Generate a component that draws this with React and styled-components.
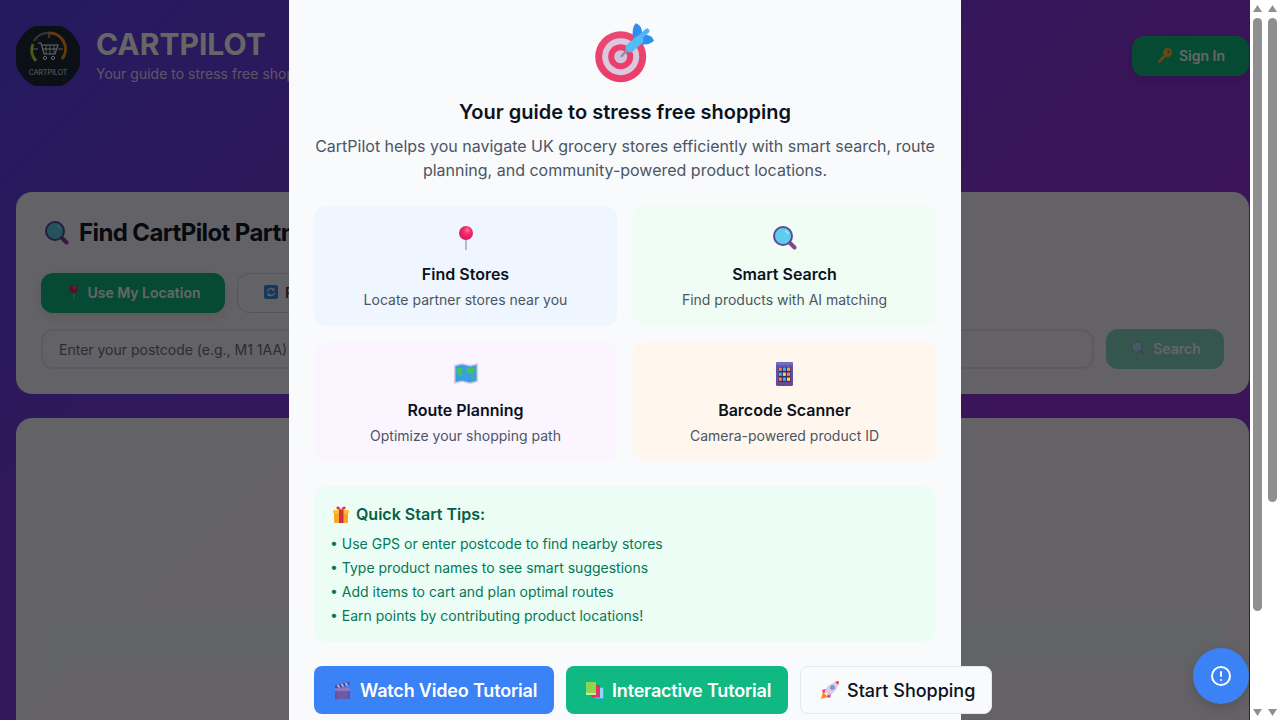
import React from 'react';
import styled, { createGlobalStyle } from 'styled-components';

const Global = createGlobalStyle`
  html, body { margin: 0; padding: 0; height: 100%; overflow: hidden; }
  body { font-family: Inter, "Noto Sans", sans-serif; }
  * { box-sizing: border-box; }
`;

const Shell = styled.div`
  display: flex;
  width: 1280px;
  height: 720px;
  overflow: hidden;
  background: #fff;
`;

const Page = styled.div`
  position: relative;
  width: 1250px;
  height: 720px;
  overflow: hidden;
  padding: 26px 1px 0 16px;
  background: linear-gradient(135deg, #5b42ec 0%, #7b3ce6 30%, #9134de 63%, #9a32e0 100%);
`;

const Header = styled.header`
  display: flex;
  align-items: flex-start;
  height: 166px;
`;

const Logo = styled.svg`
  width: 64px;
  height: 60px;
  flex: none;
`;

const Brand = styled.div`
  margin-left: 16px;
  flex: 1;
`;

const BrandName = styled.h1`
  margin: 0;
  font-size: 30px;
  line-height: 36px;
  font-weight: 700;
  color: #fff;
`;

const BrandSub = styled.p`
  margin: 2px 0 0;
  font-size: 14px;
  line-height: 20px;
  color: rgba(255, 255, 255, 0.8);
`;

const Slot = styled.span`
  display: inline-flex;
  flex: none;
  align-items: center;
  justify-content: center;
  width: ${(p) => p.$w}px;
  padding-right: ${(p) => p.$gap}px;
`;

const pillBase = `
  display: flex;
  align-items: center;
  justify-content: center;
  border: 0;
  color: #fff;
  padding: 0 0 2px;
  font: 600 14px Inter, sans-serif;
`;

const SignIn = styled.button`
  ${pillBase}
  width: 117px;
  height: 40px;
  margin-top: 10px;
  border-radius: 12px;
  background: #10b981;
  box-shadow: 0 4px 12px rgba(0, 0, 0, 0.15);
`;

const Card = styled.section`
  background: rgba(255, 255, 255, 0.95);
  border-radius: 16px;
`;

const SearchCard = styled(Card)`
  height: 202px;
  padding: 25px 25px 0;
`;

const SearchTitle = styled.h2`
  display: flex;
  align-items: center;
  margin: 0 0 24px;
  font-size: 24px;
  line-height: 32px;
  font-weight: 700;
  letter-spacing: -0.6px;
  color: #111827;
  white-space: nowrap;
`;

const ActionRow = styled.div`
  display: flex;
  gap: 12px;
  height: 40px;
`;

const GreenAction = styled.button`
  ${pillBase}
  width: 184px;
  border-radius: 12px;
  background: #10b981;
  box-shadow: 0 4px 12px rgba(0, 0, 0, 0.1);
`;

const GhostAction = styled.button`
  display: flex;
  align-items: center;
  width: 150px;
  border: 1px solid #d1d5db;
  border-radius: 12px;
  background: transparent;
  color: #374151;
  font: 600 14px Inter, sans-serif;
  padding: 0 0 2px 26px;
`;

const SearchRow = styled.div`
  display: flex;
  gap: 12px;
  margin-top: 16px;
  height: 40px;
`;

const PostcodeInput = styled.div`
  flex: 1;
  border: 2px solid #e5e7eb;
  border-radius: 12px;
  padding: 0 16px;
  font-size: 14px;
  line-height: 37px;
  color: #6b7280;
`;

const SearchButton = styled.button`
  ${pillBase}
  width: 118px;
  border-radius: 12px;
  background: #10b981;
  opacity: 0.5;
`;

const ResultsCard = styled(Card)`
  height: 400px;
  margin-top: 24px;
  padding: 200px 25px 0;
`;

const ResultsStrip = styled.div`
  height: 52px;
  border-radius: 8px;
  background: #f3f7f9;
`;

const Overlay = styled.div`
  position: absolute;
  inset: 0;
  display: flex;
  justify-content: center;
  background: rgba(0, 0, 0, 0.6);
`;

const Modal = styled.div`
  width: 672px;
  height: 720px;
  padding: 23px 25px 0;
  background: #f9fafc;
  text-align: center;
`;

const Target = styled.div`
  display: flex;
  justify-content: center;
  height: 60px;
`;

const ModalTitle = styled.h2`
  margin: 15px 0 0;
  font-size: 20px;
  line-height: 28px;
  font-weight: 600;
  color: #0b1220;
`;

const ModalLead = styled.p`
  margin: 8px 0 0;
  font-size: 16px;
  line-height: 24px;
  color: #4b5563;
`;

const Features = styled.div`
  display: grid;
  grid-template-columns: 1fr 1fr;
  gap: 16px;
  margin-top: 24px;
`;

const Feature = styled.div`
  height: 120px;
  border-radius: 12px;
  padding-top: 16px;
  background: ${(p) => p.$bg};
`;

const FeatureIcon = styled.div`
  display: flex;
  align-items: center;
  justify-content: center;
  height: 31px;
`;

const FeatureTitle = styled.h3`
  margin: 9px 0 0;
  font-size: 16px;
  line-height: 24px;
  font-weight: 600;
  color: #0b1220;
`;

const FeatureText = styled.p`
  margin: 4px 0 0;
  font-size: 14px;
  line-height: 20px;
  color: #4b5563;
`;

const Tips = styled.div`
  height: 156px;
  margin-top: 24px;
  padding: 16px;
  border-radius: 12px;
  background: #ecfdf5;
  text-align: left;
`;

const TipsTitle = styled.h4`
  display: flex;
  align-items: center;
  margin: 0 0 6px;
  font-size: 16px;
  line-height: 24px;
  font-weight: 600;
  color: #065f46;
`;

const TipItem = styled.div`
  font-size: 14px;
  line-height: 24px;
  color: #047857;
`;

const Buttons = styled.div`
  display: flex;
  gap: 12px;
  margin-top: 24px;
`;

const ModalButton = styled.button`
  display: flex;
  align-items: center;
  flex: none;
  width: ${(p) => p.$w}px;
  height: 48px;
  padding: 0 16px;
  border-radius: 8px;
  border: ${(p) => (p.$outline ? '1px solid #e2e8f0' : '0')};
  background: ${(p) => p.$bg};
  color: ${(p) => p.$fg};
  font: ${(p) => (p.$outline ? 500 : 600)} 18px Inter, sans-serif;
  letter-spacing: ${(p) => (p.$outline ? '0' : '-0.18px')};
  white-space: nowrap;
`;

const Fab = styled.button`
  position: absolute;
  right: 1px;
  top: 648px;
  width: 56px;
  height: 56px;
  border: 0;
  padding: 0;
  border-radius: 50%;
  background: #3b82f6;
  color: #fff;
  display: flex;
  align-items: center;
  justify-content: center;
  box-shadow: 0 4px 12px rgba(0, 0, 0, 0.15);
`;

const Scrollbar = styled.div`
  position: relative;
  width: 15px;
  height: 720px;
  background: #fff;
`;

const Thumb = styled.div`
  position: absolute;
  left: 3px;
  top: 18px;
  width: 9px;
  height: ${(p) => p.$h}px;
  border-radius: 5px;
  background: #8f8f8f;
`;

const Arrow = styled.svg`
  position: absolute;
  left: 3px;
  width: 9px;
  height: 7px;
  ${(p) => (p.$down ? 'bottom: 4px; transform: rotate(180deg);' : 'top: 5px;')}
`;

const TargetIcon = () => (
  <svg width="60" height="60" viewBox="0 0 60 60">
    <defs>
      <linearGradient id="tg" x1="0" y1="0" x2="0" y2="1">
        <stop offset="0" stopColor="#e84a72" />
        <stop offset="1" stopColor="#ee3a6a" />
      </linearGradient>
    </defs>
    <circle cx="25.7" cy="33.7" r="25.5" fill="url(#tg)" />
    <circle cx="25.7" cy="33.7" r="18.5" fill="#d9c8de" />
    <circle cx="25.7" cy="33.7" r="12.5" fill="#ec3d6d" />
    <circle cx="25.7" cy="33.7" r="6.5" fill="#d3c3da" />
    <path d="M26.7 33 34 25" stroke="#8f8f9e" strokeWidth="2.5" strokeLinecap="round" />
    <path d="M38 14C37 8 38 3 41 .3 45 2 47 5 47 10L44 18Z" fill="#2f8fee" />
    <path d="M44 20C50 23 55 21 59 17.7 57 13 53 11 49 12Z" fill="#2f8fee" />
    <path d="M42 17 52 8" stroke="#55b3f5" strokeWidth="5" strokeLinecap="round" />
    <path d="M35 25 44 17" stroke="#4fbdf6" strokeWidth="9" strokeLinecap="round" />
  </svg>
);

const Pin = ({ h = 24 }) => (
  <svg width={(h * 16) / 24} height={h} viewBox="0 0 16 24">
    <defs>
      <radialGradient id="pn" cx="0.6" cy="0.3" r="0.7">
        <stop offset="0" stopColor="#ff7aa0" />
        <stop offset="0.35" stopColor="#f52d6b" />
        <stop offset="1" stopColor="#d6195a" />
      </radialGradient>
    </defs>
    <rect x="7" y="12" width="2" height="12" fill="#bdb4c8" />
    <circle cx="8" cy="7" r="7" fill="url(#pn)" />
  </svg>
);

const Magnifier = ({ s = 24 }) => (
  <svg width={s} height={s} viewBox="0 0 24 24">
    <path d="M17 17 21.5 21.5" stroke="#86438f" strokeWidth="4" strokeLinecap="round" />
    <circle cx="10" cy="10" r="9" fill="#5ecdec" stroke="#5a4a9c" strokeWidth="2" />
    <path d="M13 5a6 6 0 0 1 2 2.5" stroke="#b6ecf8" strokeWidth="1.4" fill="none" strokeLinecap="round" />
  </svg>
);

const MapIcon = () => (
  <svg width="24" height="21" viewBox="0 0 24 21">
    <path d="M0 2 8 0 16 2 24 0V19L16 21 8 19 0 21Z" fill="#d6c9e2" />
    <path d="M1.5 3.2 8 1.6 16 3.6 22.5 2V17.8L16 19.4 8 17.4 1.5 19Z" fill="#3a9fe2" />
    <path d="M3 5h5l1 3-2 1 1 4-2 1-2-4-2-1zM12 6l5-2 4 1-1 4-2 3-2-2-3 0zM17 14l2-1 1 2-2 1z" fill="#46c067" />
  </svg>
);

const Abacus = () => {
  const colors = ['#ff7a45', '#2fb3f3', '#ff9a3c', '#2fb3f3', '#ffcf40', '#ff7a45', '#ff7a45', '#2fb3f3', '#ffcf40'];
  return (
    <svg width="17" height="24" viewBox="0 0 17 24">
      <defs>
        <linearGradient id="ab" x1="0" y1="0" x2="0" y2="1">
          <stop offset="0" stopColor="#5d5ab4" />
          <stop offset="1" stopColor="#6f4592" />
        </linearGradient>
      </defs>
      <rect width="17" height="24" rx="1.5" fill="url(#ab)" />
      <rect width="17" height="3" rx="1.5" fill="#6f6cc6" />
      <rect x="2.5" y="5" width="12" height="15" fill="#3a2a63" />
      {colors.map((c, i) => (
        <rect key={i} x={2.8 + (i % 3) * 4.1} y={5.5 + Math.floor(i / 3) * 5} width="3" height="3.4" fill={c} />
      ))}
    </svg>
  );
};

const Gift = () => (
  <svg width="16" height="17" viewBox="0 0 16 17">
    <rect x="1" y="6" width="14" height="11" rx="1" fill="#f9a825" />
    <rect y="4" width="16" height="3.5" rx="1" fill="#ffc233" />
    <rect x="6" y="4" width="4.5" height="13" fill="#cf2e4a" />
    <path d="M8 4C5 4 3 3 3.500 1.200 4.500-.2 7 1 8 4 9 1 11.500-.2 12.500 1.200 13 3 11 4 8 4Z" fill="#d8324c" />
  </svg>
);

const Clapper = () => (
  <svg width="17" height="17" viewBox="0 0 17 17">
    <rect x="1" y="6" width="15" height="11" rx="1" fill="#6c5aa8" />
    <path d="M1 6h15v3H1z" fill="#8b78c4" />
    <path d="M2 9v8M15 9v8" stroke="#5a4890" />
    <path d="M.5 3.500 15 0l1 3L1.500 6.500Z" fill="#5b4a8f" />
    <path d="M3.500 3 5.500 5.500M7.500 2 9.500 4.600M11.500 1 13.500 3.700" stroke="#c9bfe6" strokeWidth="1.5" />
  </svg>
);

const Books = () => (
  <svg width="18" height="17" viewBox="0 0 18 17">
    <rect x="9" y="5" width="9" height="12" fill="#33aef0" />
    <rect x="14" y="6" width="3" height="10" fill="#8fd6fa" />
    <rect x="5" y="3" width="9" height="12" fill="#e0355f" />
    <rect y="0" width="10" height="13" fill="#8ed552" />
    <rect x="0" y="11" width="10" height="2" fill="#c9ef9a" />
  </svg>
);

const Rocket = () => (
  <svg width="18" height="18" viewBox="0 0 18 18">
    <path d="M2 11 0 18l7-2Z" fill="#ff8a1f" />
    <path d="M5 8 1 9 2 12 6 11ZM10 13l-1 4-3-1 1-4Z" fill="#f33a78" />
    <path d="M3.800 10.500C5 6 10 1.500 18 0 17 8 12.500 13 7.500 14.200Z" fill="#d9cde6" />
    <path d="M14 .8 18 0 17.300 4Z" fill="#ee3e55" />
    <circle cx="11.500" cy="6.500" r="2" fill="#6a9fe8" stroke="#8a7bb8" strokeWidth=".8" />
  </svg>
);

const Key = () => (
  <svg width="14" height="15" viewBox="0 0 14 15">
    <path d="M8 6.500 1 14" stroke="#ffb02e" strokeWidth="2.600" strokeLinecap="round" />
    <circle cx="9.500" cy="4.500" r="4.500" fill="#ffb830" />
    <circle cx="10.500" cy="3.500" r="1" fill="#6d4a10" />
  </svg>
);

const Refresh = () => (
  <svg width="14" height="14" viewBox="0 0 14 14">
    <rect width="14" height="14" rx="2" fill="#3b8ae6" />
    <path d="M3.500 6.500A3.600 3.600 0 0 1 10 5M10.500 7.500A3.600 3.600 0 0 1 4 9" fill="none" stroke="#e8eef8" strokeWidth="1.400" />
    <path d="M10.500 2.800V5.700H7.700ZM3.500 11.200V8.300H6.300Z" fill="#e8eef8" />
  </svg>
);

const LogoArt = () => (
  <Logo viewBox="0 0 64 60">
    <circle cx="32" cy="30" r="33" fill="#1c2a38" />
    <path d="M20 35A16 16 0 0 1 17 18" fill="none" stroke="#c3df36" strokeWidth="3" />
    <path d="M18 15A16 16 0 0 1 33 7" fill="none" stroke="#8a8f80" strokeWidth="2" />
    <path d="M33 7A16 16 0 0 1 46 33" fill="none" stroke="#ff8f1f" strokeWidth="3" />
    <path d="M33 8v4M16 23h6M42 23h5" stroke="#e5e5e5" strokeWidth="1" />
    <path d="M22 17h3l3 11h11l3-9H26M27 23h13" fill="none" stroke="#fff" strokeWidth="1.100" />
    <path d="M30 19v9M34 19v9M38 19v9" stroke="#fff" strokeWidth=".8" />
    <circle cx="29" cy="32" r="1.600" fill="none" stroke="#fff" />
    <circle cx="37" cy="32" r="1.600" fill="none" stroke="#fff" />
    <text x="32" y="49" textAnchor="middle" fontSize="7" fill="#e5e5e5" fontFamily="Inter">CARTPILOT</text>
  </Logo>
);

const features = [
  [<Pin />, 'Find Stores', 'Locate partner stores near you', '#eff6ff'],
  [<Magnifier />, 'Smart Search', 'Find products with AI matching', '#f0fdf4'],
  [<MapIcon />, 'Route Planning', 'Optimize your shopping path', '#faf5ff'],
  [<Abacus />, 'Barcode Scanner', 'Camera-powered product ID', '#fff7ed'],
];

const tips = [
  'Use GPS or enter postcode to find nearby stores',
  'Type product names to see smart suggestions',
  'Add items to cart and plan optimal routes',
  'Earn points by contributing product locations!',
];

const Bar = ({ h }) => (
  <Scrollbar>
    <Arrow viewBox="0 0 9 7"><path d="M4.500 0 9 7H0z" fill="#8f8f8f" /></Arrow>
    <Thumb $h={h} />
    <Arrow $down viewBox="0 0 9 7"><path d="M4.500 0 9 7H0z" fill="#8f8f8f" /></Arrow>
  </Scrollbar>
);

export default function App() {
  return (
    <Shell>
      <Global />
      <Page>
        <Header>
          <LogoArt />
          <Brand>
            <BrandName>CARTPILOT</BrandName>
            <BrandSub>Your guide to stress free shopping</BrandSub>
          </Brand>
          <SignIn><Slot $w={23} $gap={5}><Key /></Slot>Sign In</SignIn>
        </Header>
        <SearchCard>
          <SearchTitle><Slot $w={38} $gap={6}><Magnifier /></Slot>Find CartPilot Partner Stores</SearchTitle>
          <ActionRow>
            <GreenAction><Slot $w={22} $gap={5}><Pin h={14} /></Slot>Use My Location</GreenAction>
            <GhostAction><Slot $w={21} $gap={7}><Refresh /></Slot>Refresh</GhostAction>
          </ActionRow>
          <SearchRow>
            <PostcodeInput>Enter your postcode (e.g., M1 1AA)</PostcodeInput>
            <SearchButton><Slot $w={24} $gap={6}><Magnifier s={14} /></Slot>Search</SearchButton>
          </SearchRow>
        </SearchCard>
        <ResultsCard>
          <ResultsStrip />
        </ResultsCard>
        <Overlay>
          <Modal>
            <Target><TargetIcon /></Target>
            <ModalTitle>Your guide to stress free shopping</ModalTitle>
            <ModalLead>
              CartPilot helps you navigate UK grocery stores efficiently with smart search, route planning, and community-powered product locations.
            </ModalLead>
            <Features>
              {features.map(([icon, title, text, bg]) => (
                <Feature key={title} $bg={bg}>
                  <FeatureIcon>{icon}</FeatureIcon>
                  <FeatureTitle>{title}</FeatureTitle>
                  <FeatureText>{text}</FeatureText>
                </Feature>
              ))}
            </Features>
            <Tips>
              <TipsTitle><Slot $w={26} $gap={4}><Gift /></Slot>Quick Start Tips:</TipsTitle>
              {tips.map((t) => (
                <TipItem key={t}>• {t}</TipItem>
              ))}
            </Tips>
            <Buttons>
              <ModalButton $w={240} $bg="#3b82f6" $fg="#fff"><Slot $w={30} $gap={5}><Clapper /></Slot>Watch Video Tutorial</ModalButton>
              <ModalButton $w={222} $bg="#10b981" $fg="#fff"><Slot $w={30} $gap={5}><Books /></Slot>Interactive Tutorial</ModalButton>
              <ModalButton $w={192} $outline $bg="#f9fafc" $fg="#0b1220"><Slot $w={30} $gap={5}><Rocket /></Slot>Start Shopping</ModalButton>
            </Buttons>
          </Modal>
        </Overlay>
        <Fab aria-label="Feedback">
          <svg width="24" height="24" viewBox="0 0 24 24" fill="none" stroke="currentColor" strokeWidth="2" strokeLinecap="round" strokeLinejoin="round">
            <circle cx="12" cy="12" r="9" />
            <path d="M12 8v4M12 16h.01" />
          </svg>
        </Fab>
      </Page>
      <Bar h={593} />
      <Bar h={484} />
    </Shell>
  );
}
